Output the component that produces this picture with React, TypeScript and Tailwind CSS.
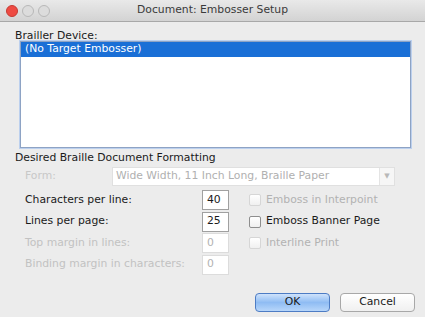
import React from 'react';

const font = { fontFamily: '"Lucida Grande", "DejaVu Sans", sans-serif' };

const TrafficLight: React.FC<{ color: string }> = ({ color }) => (
  <span className={`block w-[12px] h-[12px] rounded-full border ${color}`} />
);

const Checkbox: React.FC<{ label: string; disabled?: boolean }> = ({ label, disabled }) => (
  <div className="flex items-center gap-[5px] h-[21px]">
    <span
      className={`block w-[12px] h-[12px] rounded-[2px] border bg-gradient-to-b from-white to-[#f0f0f0] ${
        disabled ? 'border-[#d6d6d6]' : 'border-[#8e8e8e]'
      }`}
    />
    <span className={disabled ? 'text-[#b2b2b2]' : 'text-[#1a1a1a]'}>{label}</span>
  </div>
);

const NumberField: React.FC<{ label: string; value: string; disabled?: boolean }> = ({
  label,
  value,
  disabled,
}) => (
  <div className="flex items-center h-[21px]">
    <span className={`w-[177px] whitespace-nowrap ${disabled ? 'text-[#c2c2c2]' : 'text-[#1a1a1a]'}`}>
      {label}
    </span>
    <span
      className={`flex items-center w-[27px] h-[20px] pl-[4px] bg-white border ${
        disabled ? 'border-[#dcdcdc] text-[#b2b2b2]' : 'border-[#a0a0a0] text-[#1a1a1a]'
      }`}
    >
      {value}
    </span>
  </div>
);

export default function App() {
  return (
    <div
      className="w-[425px] h-[317px] bg-[#ececec] flex flex-col text-[10.8px] leading-none overflow-hidden whitespace-nowrap"
      style={font}
    >
      {/* title bar */}
      <div className="relative h-[22px] flex items-center px-[6px] bg-gradient-to-b from-[#e9e9e9] to-[#d3d3d3] border-b border-[#a8a8a8]">
        <div className="flex gap-[4px]">
          <TrafficLight color="bg-[#ee4b43] border-[#c63b33]" />
          <TrafficLight color="bg-[#dcdcdc] border-[#b8b8b8]" />
          <TrafficLight color="bg-[#dcdcdc] border-[#b8b8b8]" />
        </div>
        <div className="absolute inset-0 flex items-center justify-center text-[#3a3a3a]">
          Document: Embosser Setup
        </div>
      </div>

      <div className="flex flex-col px-[15px] pt-[9px]">
        <div className="text-[#1a1a1a] h-[10px]">Brailler Device:</div>
        <div className="ml-[5px] w-[391px] h-[107px] bg-white border border-[#8ea3c4] shadow-[0_0_0_1px_#bcd0ee]">
          <div className="h-[15px] bg-[#1a6fd6] text-white flex items-center pl-[4px]">
            (No Target Embosser)
          </div>
        </div>

        <div className="mt-[5px] text-[#1a1a1a]">Desired Braille Document Formatting</div>

        <div className="flex items-center mt-[3px] pl-[10px]">
          <span className="w-[87px] text-[#c8c8c8]">Form:</span>
          <div className="flex w-[283px] h-[19px] bg-white border border-[#e0e0e0]">
            <span className="flex-1 flex items-center pl-[3px] text-[#b0b0b0]">
              Wide Width, 11 Inch Long, Braille Paper
            </span>
            <span className="w-[15px] flex items-center justify-center border-l border-[#e4e4e4] bg-[#f6f6f6] text-[7px] text-[#b8b8b8]">
              ▼
            </span>
          </div>
        </div>

        <div className="flex mt-[4px] pl-[10px]">
          <div className="flex flex-col gap-[0.5px]">
            <NumberField label="Characters per line:" value="40" />
            <NumberField label="Lines per page:" value="25" />
            <NumberField label="Top margin in lines:" value="0" disabled />
            <NumberField label="Binding margin in characters:" value="0" disabled />
          </div>
          <div className="flex flex-col gap-[0.5px] ml-[20px]">
            <Checkbox label="Emboss in Interpoint" disabled />
            <Checkbox label="Emboss Banner Page" />
            <Checkbox label="Interline Print" disabled />
          </div>
        </div>

        <div className="flex justify-end gap-[10px] mt-[18px] -mr-[5px]">
          <button className="w-[75px] h-[19px] rounded-[4px] border border-[#4d7cc4] bg-gradient-to-b from-[#cfe3fb] via-[#8fbcf3] to-[#b7d6fa] text-[#1a1a1a]">
            OK
          </button>
          <button className="w-[75px] h-[19px] rounded-[4px] border border-[#a8a8a8] bg-gradient-to-b from-white to-[#f0f0f0] text-[#1a1a1a]">
            Cancel
          </button>
        </div>
      </div>
    </div>
  );
}
